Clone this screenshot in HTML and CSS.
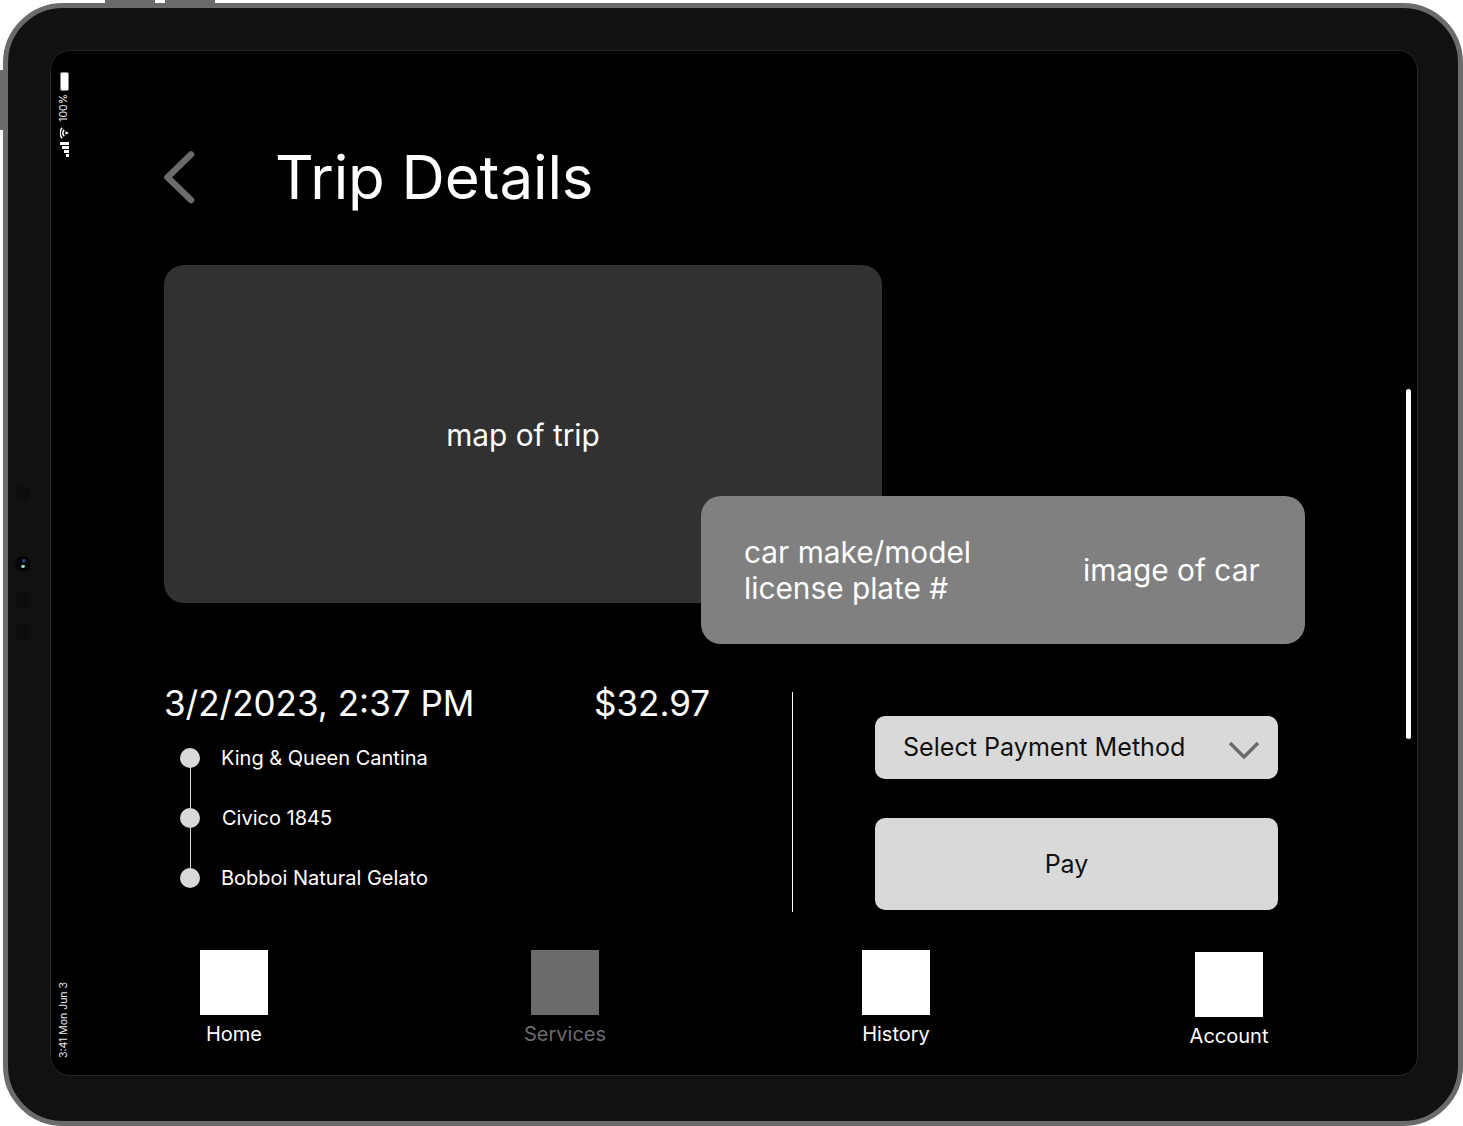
FILE: index.html
```html
<!DOCTYPE html>
<html lang="en">
<head>
<meta charset="utf-8">
<title>Trip Details</title>
<link rel="stylesheet" href="styles.css">
</head>
<body>
<div class="hw hw-top hw-top-a"></div>
<div class="hw hw-top hw-top-b"></div>
<div class="hw hw-left"></div>
<div class="device">
  <div class="sensors">
    <span class="sensor"></span>
    <span class="sensor sensor-cam"></span>
    <span class="sensor"></span>
    <span class="sensor"></span>
  </div>
  <div class="screen">
    <div class="status">
      <div class="status-top">
        <span class="battery"></span>
        <span class="status-text">100%</span>
        <svg class="wifi" width="9" height="12" viewBox="0 0 9 12" aria-hidden="true">
          <path d="M2.200.8A7.500 7.500 0 0 0 2.200 11.200M4.200 2.800A4.800 4.800 0 0 0 4.200 9.200" fill="none" stroke="#fff" stroke-width="1.500"/>
          <path d="M5.500 4.300 8.800 6 5.500 7.700Z" fill="#fff"/>
        </svg>
        <svg class="signal" width="9" height="15" viewBox="0 0 9 15" aria-hidden="true">
          <rect x="0" y="0" width="9" height="3" fill="#fff"/>
          <rect x="2" y="4" width="7" height="3" fill="#fff"/>
          <rect x="4" y="8" width="5" height="3" fill="#fff"/>
          <rect x="6" y="12" width="3" height="3" fill="#fff"/>
        </svg>
      </div>
      <span class="status-text">3:41 Mon Jun 3</span>
    </div>
    <span class="scrollbar"></span>
    <main class="content">
      <header class="header">
        <svg class="back" width="32" height="54" viewBox="0 0 32 54" aria-hidden="true">
          <path d="M27 4.500 3.500 27.250 27 50" fill="none" stroke="#6b6b6b" stroke-width="6.500" stroke-linecap="round" stroke-linejoin="round"/>
        </svg>
        <h1 class="title">Trip Details</h1>
      </header>
      <section class="stage">
        <div class="map">map of trip</div>
        <div class="car-card">
          <div class="car-info">car make/model<br>license plate #</div>
          <div class="car-image">image of car</div>
        </div>
      </section>
      <section class="details">
        <div class="trip">
          <div class="trip-head">
            <span class="trip-date">3/2/2023, 2:37 PM</span>
            <span class="trip-price">$32.97</span>
          </div>
          <ul class="stops">
            <li class="stop"><span class="dot"></span>King &amp; Queen Cantina</li>
            <li class="stop"><span class="dot"></span><span class="stop-nudge">Civico 1845</span></li>
            <li class="stop"><span class="dot"></span>Bobboi Natural Gelato</li>
          </ul>
        </div>
        <div class="divider"></div>
        <div class="payment">
          <div class="select">
            <span>Select Payment Method</span>
            <svg class="caret" width="32" height="18" viewBox="0 0 32 18" aria-hidden="true">
              <path d="M2 2 16 16 30 2" fill="none" stroke="#6b6b6b" stroke-width="3.500"/>
            </svg>
          </div>
          <div class="pay">Pay</div>
        </div>
      </section>
      <nav class="nav">
        <div class="nav-item"><span class="nav-icon"></span><span>Home</span></div>
        <div class="nav-item nav-active"><span class="nav-icon"></span><span>Services</span></div>
        <div class="nav-item"><span class="nav-icon"></span><span>History</span></div>
        <div class="nav-item nav-last"><span class="nav-icon"></span><span>Account</span></div>
      </nav>
    </main>
  </div>
</div>
</body>
</html>
```

FILE: styles.css
```css
* { box-sizing: border-box; }
html, body { margin: 0; padding: 0; }
body {
  width: 1463px;
  height: 1126px;
  background: #fff;
  font-family: Inter, "Liberation Sans", sans-serif;
  color: #fff;
  position: relative;
  overflow: hidden;
}
.hw { position: absolute; background: #6b6b6b; }
.hw-top { top: 0; width: 50px; height: 6px; }
.hw-top-a { left: 105px; }
.hw-top-b { left: 165px; }
.hw-left { left: 0; top: 70px; width: 6px; height: 60px; }
.device {
  position: absolute;
  left: 3px;
  top: 3px;
  width: 1460px;
  height: 1123px;
  padding: 42px;
  background: #111;
  border: 5px solid #6b6b6b;
  border-radius: 60px;
}
.sensors {
  position: absolute;
  left: 7px;
  top: 478px;
  display: flex;
  flex-direction: column;
}
.sensor {
  width: 16px;
  height: 16px;
  border-radius: 50%;
  background: #0d0d0d;
  margin-bottom: 16px;
}
.sensor-cam {
  margin-top: 38px;
  margin-bottom: 20px;
  background: radial-gradient(circle at 50% 65%, #8fd0c0 0 1.5px, transparent 2px), radial-gradient(circle at 55% 30%, #1f4a80 0 1.5px, transparent 2px), #060608;
}
.screen {
  position: relative;
  width: 1368px;
  height: 1026px;
  background: #000;
  border: 1px solid #26262a;
  border-radius: 20px;
  overflow: hidden;
}
.status {
  position: absolute;
  left: 8px;
  top: 21px;
  bottom: 17px;
  width: 10px;
  display: flex;
  flex-direction: column;
  justify-content: space-between;
  align-items: center;
}
.status-top { display: flex; flex-direction: column; align-items: center; }
.battery {
  width: 9px;
  height: 19px;
  background: #fff;
  border: 1px solid #8a8a8a;
  border-radius: 2px;
  display: block;
}
.status-text {
  font-size: 10.500px;
  line-height: 10px;
  color: #e8e8e8;
  writing-mode: vertical-rl;
  transform: rotate(180deg);
  white-space: nowrap;
}
.status-top .status-text { margin-top: 3px; }
.wifi { margin-top: 5px; display: block; }
.signal { margin-top: 3px; display: block; }
.scrollbar {
  position: absolute;
  left: 1355px;
  top: 338px;
  width: 5px;
  height: 350px;
  border-radius: 3px;
  background: #fff;
}
.content {
  padding: 99px 0 0 113px;
  display: flex;
  flex-direction: column;
}
.header { display: flex; align-items: center; height: 54px; }
.back { flex: none; display: block; }
.title {
  margin: 0 0 0 79px;
  font-size: 60px;
  font-weight: 400;
  line-height: 54px;
  letter-spacing: -0.1px;
  white-space: nowrap;
}
.stage { position: relative; margin-top: 61px; height: 338px; }
.map {
  width: 718px;
  height: 338px;
  padding-top: 2px;
  background: #313131;
  border-radius: 20px;
  display: flex;
  align-items: center;
  justify-content: center;
  font-size: 29.800px;
}
.car-card {
  position: absolute;
  left: 537px;
  top: 231px;
  width: 604px;
  height: 148px;
  padding-left: 43px;
  background: #808080;
  border-radius: 20px;
  display: flex;
  align-items: center;
  font-size: 29.800px;
  line-height: 36px;
}
.car-info { width: 339px; }
.car-image { white-space: nowrap; }
.details { margin-top: 89px; height: 220px; display: flex; }
.trip { width: 628px; }
.trip-head {
  display: flex;
  height: 24px;
  margin-top: -1px;
  font-size: 35px;
  line-height: 24px;
}
.trip-date { width: 430px; }
.trip-price { white-space: nowrap; }
.stops { list-style: none; margin: 13px 0 0; padding: 0; position: relative; }
.stops::before {
  content: "";
  position: absolute;
  left: 26px;
  top: 30px;
  bottom: 30px;
  width: 1px;
  background: #d9d9d9;
}
.stop {
  height: 60px;
  display: flex;
  align-items: center;
  font-size: 20px;
  position: relative;
}
.dot {
  width: 20px;
  height: 20px;
  margin: 0 21px 0 16px;
  border-radius: 50%;
  background: #d9d9d9;
  flex: none;
}
.stop-nudge { margin-left: 1px; }
.divider { width: 1px; height: 220px; background: #fff; flex: none; }
.payment { margin: 24px 0 0 82px; width: 403px; }
.select {
  height: 63px;
  padding: 0 18px 2px 28px;
  background: #d9d9d9;
  border-radius: 10px;
  color: #111;
  font-size: 25.100px;
  display: flex;
  align-items: center;
  justify-content: space-between;
}
.caret { display: block; margin-top: 6px; }
.pay {
  height: 92px;
  margin-top: 39px;
  background: #d9d9d9;
  border-radius: 10px;
  color: #111;
  font-size: 25px;
  display: flex;
  align-items: center;
  justify-content: center;
  padding-right: 20px;
}
.nav { display: flex; gap: 263px; margin-top: 38px; padding-left: 36px; }
.nav-item {
  width: 68px;
  display: flex;
  flex-direction: column;
  align-items: center;
  font-size: 20px;
  white-space: nowrap;
}
.nav-icon { width: 68px; height: 65px; background: #fff; flex: none; margin-bottom: 7px; }
.nav-active { color: #6b6b6b; }
.nav-active .nav-icon { background: #6b6b6b; }
.nav-last { margin: 2px 0 0 2px; }
```
